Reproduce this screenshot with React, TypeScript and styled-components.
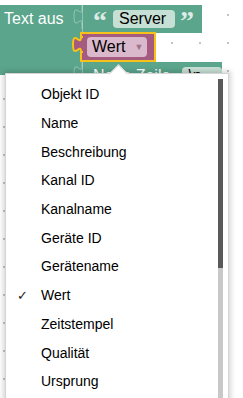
import React from 'react';
import styled, { createGlobalStyle } from 'styled-components';

const GlobalStyle = createGlobalStyle`
  html, body {
    margin: 0;
    padding: 0;
  }
  body {
    font-family: "Liberation Sans", Arial, sans-serif;
    background: #fff;
  }
`;

const GREEN = '#5ba58c';
const PURPLE = '#a55b80';
const YELLOW = '#f6c21a';

const Workspace = styled.div`
  position: relative;
  width: 243px;
  height: 398px;
  overflow: hidden;
  background-color: #fff;
  background-image: radial-gradient(circle, #c4c4c4 0.8px, transparent 1.3px);
  background-size: 28px 28px;
  background-position: -10px 1px;
`;

// blocks sit on the canvas at their own coordinates
const BlockGroup = styled.div`
  position: absolute;
  left: 0;
  top: 5px;
  display: flex;
  align-items: flex-start;
`;

const ParentBlock = styled.div`
  width: 82px;
  height: 70px;
  background: ${GREEN};
  display: flex;
  flex-direction: column;
`;

const Label = styled.div`
  height: 28px;
  display: flex;
  align-items: center;
  padding-left: 4px;
  color: #fff;
  font-size: 16px;
  white-space: nowrap;
`;

const Inputs = styled.div`
  display: flex;
  flex-direction: column;
  align-items: flex-start;
`;

const ChildBlock = styled.div<{ $width: number }>`
  position: relative;
  width: ${(p) => p.$width}px;
  height: 28px;
  box-sizing: border-box;
  background: ${GREEN};
  border-left: 1px solid rgba(255, 255, 255, 0.35);
  display: flex;
  align-items: center;
  padding-left: 10px;
  color: #fff;
  font-size: 16px;
  white-space: nowrap;
`;

const Quote = styled.span<{ $side: 'open' | 'close' }>`
  font-family: "Liberation Serif", "Times New Roman", serif;
  font-weight: bold;
  font-size: 28px;
  line-height: 22px;
  height: 22px;
  color: #dcece5;
  align-self: flex-start;
  margin-top: 5px;
  margin-left: ${(p) => (p.$side === 'open' ? 0 : 5)}px;
  margin-right: ${(p) => (p.$side === 'open' ? 6 : 0)}px;
`;

const TextField = styled.span<{ $width: number }>`
  display: inline-flex;
  align-items: center;
  width: ${(p) => p.$width}px;
  height: 18px;
  box-sizing: border-box;
  padding-left: 6px;
  border-radius: 4px;
  background: #c7e0d5;
  color: #000;
  font-size: 16px;
`;

const ValueBlock = styled.div`
  position: relative;
  margin-left: -2px;
  width: 76px;
  height: 30px;
  margin-top: -1px;
  box-sizing: border-box;
  background: ${PURPLE};
  border: 2px solid ${YELLOW};
  display: flex;
  align-items: center;
  padding-left: 5px;
  z-index: 1;
`;

const Dropdown = styled.span`
  display: inline-flex;
  align-items: center;
  width: 60px;
  height: 20px;
  box-sizing: border-box;
  padding-left: 5px;
  border-radius: 4px;
  background: #d9b9cb;
  color: #000;
  font-size: 16px;
`;

const Caret = styled.span`
  margin-left: 9px;
  font-size: 9px;
  color: #a4708d;
`;

const TabSvg = styled.svg<{ $left: number; $top: number }>`
  position: absolute;
  left: ${(p) => p.$left}px;
  top: ${(p) => p.$top}px;
  overflow: visible;
`;

const TAB = 'c 0,10 -8,-8 -8,7.5 s 8,-2.5 8,7.5';

const OutputTab = ({ left, top }: { left: number; top: number }) => (
  <TabSvg $left={left} $top={top} width="12" height="24" viewBox="0 0 12 24">
    <path d={`M11 0 V4 ${TAB} V24`} fill="none" stroke="rgba(255,255,255,0.35)" strokeWidth="1" />
  </TabSvg>
);

const ValueTab = () => (
  <TabSvg $left={-12} $top={2} width="12" height="24" viewBox="0 0 12 24">
    <path d={`M13 1 H11 ${TAB} H13`} fill={PURPLE} stroke={YELLOW} strokeWidth="2" />
  </TabSvg>
);

// dropdown menu, lies over the blocks
const Menu = styled.div`
  position: absolute;
  left: 5px;
  top: 73px;
  width: 224px;
  height: 340px;
  box-sizing: border-box;
  background: #fff;
  border: 1px solid #d4d4d4;
  box-shadow: 0 0 5px 2px rgba(0, 0, 0, 0.16);
  display: flex;
  z-index: 5;
`;

const MenuArrow = styled.div`
  position: absolute;
  top: -7px;
  left: 106px;
  width: 12px;
  height: 12px;
  background: #fff;
  border-top: 1px solid #d4d4d4;
  border-left: 1px solid #d4d4d4;
  transform: rotate(45deg);
`;

const List = styled.ul`
  flex: 1;
  margin: 0;
  padding: 6px 0 0;
  list-style: none;
`;

const Item = styled.li`
  height: 28.7px;
  display: flex;
  align-items: center;
  padding-left: 11px;
  font-size: 14px;
  color: #000;
  white-space: nowrap;
`;

const Check = styled.span`
  width: 24px;
  font-family: "DejaVu Sans", sans-serif;
  font-size: 13px;
  color: #222;
`;

const Scrollbar = styled.div`
  width: 5px;
  margin: 5px 5px 0 0;
  display: flex;
  flex-direction: column;
  background: #c8c8c8;
`;

const Thumb = styled.div`
  height: 189px;
  background: #595959;
`;

const options = [
  'Objekt ID',
  'Name',
  'Beschreibung',
  'Kanal ID',
  'Kanalname',
  'Geräte ID',
  'Gerätename',
  'Wert',
  'Zeitstempel',
  'Qualität',
  'Ursprung',
];

export default function App() {
  const selected = 'Wert';
  return (
    <>
      <GlobalStyle />
      <Workspace>
        <BlockGroup>
          <ParentBlock>
            <Label>Text aus</Label>
          </ParentBlock>
          <Inputs>
            <ChildBlock $width={120}>
              <OutputTab left={-12} top={0} />
              <Quote $side="open">“</Quote>
              <TextField $width={62}>Server</TextField>
              <Quote $side="close">”</Quote>
            </ChildBlock>
            <ValueBlock>
              <ValueTab />
              <Dropdown>
                Wert<Caret>▼</Caret>
              </Dropdown>
            </ValueBlock>
            <ChildBlock $width={140}>
              <OutputTab left={-12} top={0} />
              Neue Zeile
              <TextField $width={41} style={{ marginLeft: 12 }}>\n</TextField>
            </ChildBlock>
          </Inputs>
        </BlockGroup>
        <Menu>
          <MenuArrow />
          <List>
            {options.map((o) => (
              <Item key={o}>
                <Check>{o === selected ? '✓' : ''}</Check>
                {o}
              </Item>
            ))}
          </List>
          <Scrollbar>
            <Thumb />
          </Scrollbar>
        </Menu>
      </Workspace>
    </>
  );
}
